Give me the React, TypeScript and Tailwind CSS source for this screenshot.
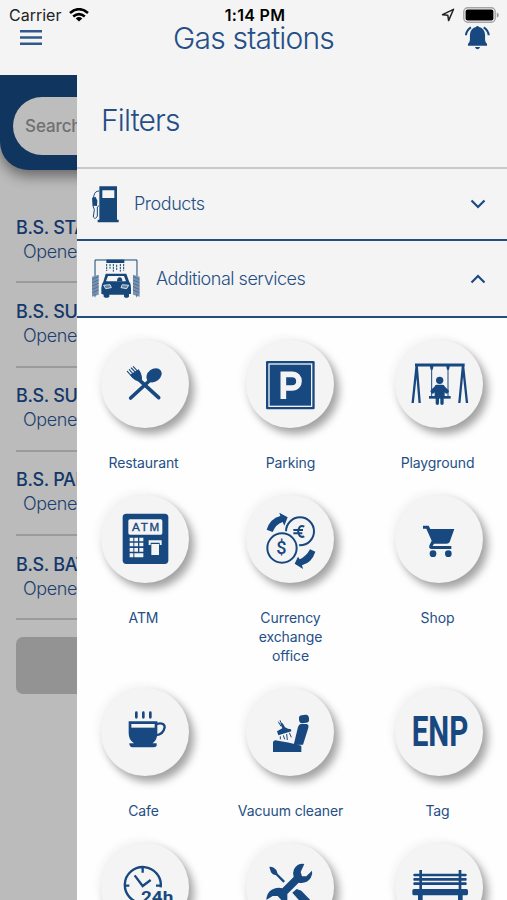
import type { ReactNode } from 'react';

const stations = ['B.S. STARA PAZOVA', 'B.S. SURČIN', 'B.S. SUBOTICA', 'B.S. PANČEVO', 'B.S. BATAJNICA'];

function IconCanvas({ viewBox, children }: { viewBox: string; children: ReactNode }) {
  return (
    <svg viewBox={viewBox} className="size-[88px]" fill="#184880" stroke="none">
      {children}
    </svg>
  );
}

function RestaurantIcon() {
  return (
    <IconCanvas viewBox="33 30 264 264">
      <g stroke="#184880" strokeLinecap="round">
        <path d="M146 148 206 203M184 147 122 204" strokeWidth="11" />
        <path d="M112 124l15 17M118 119l15 17M124 114l16 17M130 110l16 17" strokeWidth="3.4" />
      </g>
      <path d="M120 134 146 118Q157 133 156 149L150 155Q132 153 120 134Z" />
      <ellipse cx="192" cy="136" rx="25" ry="19" transform="rotate(-38 192 136)" />
    </IconCanvas>
  );
}

function ParkingIcon() {
  return (
    <IconCanvas viewBox="18 30 264 264">
      <rect x="78" y="93" width="146" height="145" rx="4" />
      <rect x="87" y="102" width="128" height="127" fill="none" stroke="#eef2f7" strokeWidth="4" />
      <path
        d="M130 207V133H156C184 133 184 174 156 174H130"
        fill="none"
        stroke="#f4f4f4"
        strokeWidth="17"
      />
    </IconCanvas>
  );
}

function PlaygroundIcon() {
  return (
    <IconCanvas viewBox="24 30 264 264">
      <g fill="none" stroke="#184880">
        <path d="M84 105H233" strokeWidth="9" />
        <path d="M89 106 77 219M89 106 98 219M228 106 217 219M228 106 240 219" strokeWidth="7" />
        <path d="M134 106V200M183 106V200" strokeWidth="3" />
        <path d="M126 202H191" strokeWidth="8" />
        <path d="M150 172 137 184M166 172 179 184" strokeWidth="13" strokeLinecap="round" />
        <path d="M151 198V220M165 198V220" strokeWidth="10" strokeLinecap="round" />
      </g>
      <path d="M128 106H140L137 119H131ZM177 106H189L186 119H180Z" />
      <circle cx="158" cy="151" r="11" />
      <rect x="143" y="164" width="30" height="40" rx="7" />
    </IconCanvas>
  );
}

function AtmIcon() {
  return (
    <IconCanvas viewBox="33 30 264 264">
      <rect x="98" y="86" width="137" height="151" rx="11" />
      <rect x="115" y="103" width="102" height="46" rx="5" fill="#f4f4f4" />
      <text
        x="126"
        y="138"
        textLength="82"
        lengthAdjust="spacing"
        className="font-['Liberation_Sans',sans-serif] text-[35px]"
        stroke="#184880"
        strokeWidth="1"
      >
        ATM
      </text>
      <g fill="#f4f4f4">
        <path d="M119 158h11v11h-11zM133 158h11v11h-11zM148 158h12v11h-12zM119 173h11v11h-11zM133 173h11v11h-11zM148 173h12v11h-12zM119 189h11v11h-11zM133 189h11v11h-11zM148 189h12v11h-12zM119 205h11v12h-11zM133 205h27v12h-27z" />
        <path d="M176 166h39v14h-6v-7h-27v7h-6z" />
        <path d="M184 177h23v33h-23z" />
      </g>
    </IconCanvas>
  );
}

function CurrencyIcon() {
  return (
    <IconCanvas viewBox="18 30 264 264">
      <circle cx="180" cy="139" r="42" fill="none" stroke="#184880" strokeWidth="6" />
      <circle cx="126" cy="189" r="52" fill="#f4f4f4" />
      <circle cx="126" cy="189" r="44" fill="none" stroke="#184880" strokeWidth="6" />
      <text x="109" y="207" className="font-[Roboto,sans-serif] text-[54px] font-medium">
        $
      </text>
      <path
        d="M193 125C169 113 168 165 193 154M160 135H189M160 145H187"
        fill="none"
        stroke="#184880"
        strokeWidth="6"
      />
      <path d="M80 134Q90 101 121 93L118 83 143 97 133 122 128 111Q107 118 98 141Z" />
      <path d="M226 200Q216 232 186 241L189 252 164 236 174 215 179 223Q199 214 210 193Z" />
    </IconCanvas>
  );
}

function ShopIcon() {
  return (
    <IconCanvas viewBox="465 30 264 264">
      <path d="M549 122H566L571 132H643L629 171Q626 176 620 176H582L578 183H634V192H574Q564 190 569 179L575 167 559 131H549Z" />
      <circle cx="579" cy="206" r="10" />
      <circle cx="625" cy="206" r="10" />
    </IconCanvas>
  );
}

function CafeIcon() {
  return (
    <IconCanvas viewBox="33 24 264 264">
      <path d="M116 124H202V159Q202 180 188 190H200V197Q197 202 190 202H127Q118 201 118 190H132Q116 180 116 159Z" />
      <rect x="124" y="132" width="70" height="11" fill="#f4f4f4" />
      <path
        d="M139 98V112M160 98V112M181 98V112"
        stroke="#184880"
        strokeWidth="8"
        strokeLinecap="round"
      />
      <path d="M199 132Q224 126 224 142Q220 164 197 166" fill="none" stroke="#184880" strokeWidth="7" />
    </IconCanvas>
  );
}

function VacuumIcon() {
  return (
    <IconCanvas viewBox="468 24 264 264">
      <rect x="627" y="105" width="30" height="24" rx="10" transform="rotate(-6 642 117)" />
      <path d="M632 132H650Q657 134 655 143L639 194 611 195 624 141Q626 134 632 132Z" />
      <path d="M556 181 598 188 634 197 634 216H549V187Q551 181 556 181Z" />
      <path d="M561 154 577 145 571 130H578L585 142Q594 148 603 148L604 154 565 166Z" />
      <path
        d="M570 121 578 139M565 125 573 139M571 169V178M580 166 584 178M590 162 592 180M598 158 604 172"
        fill="none"
        stroke="#184880"
        strokeWidth="3"
      />
    </IconCanvas>
  );
}

function TagIcon() {
  return (
    <IconCanvas viewBox="195 24 264 264">
      <text
        x="245"
        y="197"
        textLength="170"
        lengthAdjust="spacingAndGlyphs"
        className="font-[Roboto,sans-serif] text-[125px] font-bold"
      >
        ENP
      </text>
    </IconCanvas>
  );
}

function AllDayIcon() {
  return (
    <IconCanvas viewBox="33 489 264 264">
      <path
        d="M212 622A54 54 0 1 0 158 669M158 562V578M106 617H118M198 617H211M134 586 158 618 182 600"
        fill="none"
        stroke="#184880"
        strokeWidth="7"
      />
      <text
        x="153"
        y="668"
        textLength="97"
        lengthAdjust="spacingAndGlyphs"
        className="font-[Roboto,sans-serif] text-[52px] font-bold"
      >
        24h
      </text>
    </IconCanvas>
  );
}

function ServiceIcon() {
  return (
    <IconCanvas viewBox="468 489 264 264">
      <path d="M538 561Q548 558 559 570L563 581 585 603 580 608 558 586Q547 584 543 577Z" />
      <path d="M643 552Q623 549 612 568Q607 579 611 591L577 625Q562 620 545 629Q530 638 529 660L548 648H563L574 660H592L592 642 626 608Q650 612 662 594Q669 583 666 572L649 589H636L632 576Z" />
      <path d="M607 638 620 627 634 632 680 680H644Z" />
    </IconCanvas>
  );
}

function BenchIcon() {
  return (
    <IconCanvas viewBox="195 489 264 264">
      <path d="M268 570h8v104h-8zM386 570h8v104h-8z" />
      <rect x="250" y="581" width="160" height="8" rx="3" />
      <rect x="250" y="594" width="160" height="8" rx="3" />
      <rect x="250" y="607" width="160" height="8" rx="3" />
      <rect x="247" y="627" width="167" height="19" rx="5" />
      <path d="M264 644h14v40h-14zM384 644h14v40h-14z" />
    </IconCanvas>
  );
}

const services = [
  { label: 'Restaurant', icon: <RestaurantIcon /> },
  { label: 'Parking', icon: <ParkingIcon /> },
  { label: 'Playground', icon: <PlaygroundIcon /> },
  { label: 'ATM', icon: <AtmIcon /> },
  { label: 'Currency\nexchange\noffice', icon: <CurrencyIcon /> },
  { label: 'Shop', icon: <ShopIcon /> },
  { label: 'Cafe', icon: <CafeIcon /> },
  { label: 'Vacuum cleaner', icon: <VacuumIcon /> },
  { label: 'Tag', icon: <TagIcon /> },
  { label: '', icon: <AllDayIcon /> },
  { label: '', icon: <ServiceIcon /> },
  { label: '', icon: <BenchIcon /> },
];

// Circles sit slightly off the label axis in each column.
const columnPadding = ['pl-[2px]', 'pr-[2px]', 'pl-[2px]'];

function Header() {
  return (
    <header className="h-[75px] shrink-0 bg-[#f4f4f4]">
      <div className="grid h-[28px] grid-cols-3 items-center pt-[2px] pr-[8px] pl-[9px] text-black">
        <div className="flex items-center gap-[8px]">
          <span className="text-[16px] leading-[20px] text-[#222]">Carrier</span>
          <svg viewBox="0 0 20 14" className="h-[14px] w-[20px]" fill="none" stroke="#000" strokeWidth="2.6">
            <path d="M1 5Q10-2.6 19 5M4.2 8.6Q10 3.8 15.8 8.6" />
            <path d="M10 13.6 6.7 10.4Q10 7.6 13.3 10.4Z" fill="#000" stroke="none" />
          </svg>
        </div>
        <span className="pl-[2px] text-center text-[16px] leading-[20px] font-semibold tracking-[0.02em] whitespace-nowrap">
          1:14 PM
        </span>
        <div className="flex items-center justify-end gap-[8px]">
          <svg viewBox="0 0 14 14" className="size-[14px]" fill="none" stroke="#222" strokeWidth="1.5">
            <path d="M12.5 1.3 1.5 6.7 6.8 7.2 7.6 12.6Z" strokeLinejoin="round" />
          </svg>
          <svg viewBox="0 0 36 16" className="h-[16px] w-[36px]">
            <rect x="0.8" y="0.8" width="31.4" height="14.4" rx="4" fill="none" stroke="#a5a5a5" strokeWidth="1.4" />
            <rect x="2.6" y="2.6" width="27.8" height="10.8" rx="2" fill="#000" />
            <path d="M33.8 5.4Q35.8 6 35.8 8T33.8 10.6Z" fill="#999" />
          </svg>
        </div>
      </div>
      <div className="flex h-[19px] items-center justify-between pr-[17px] pl-[20px]">
        <svg viewBox="0 0 22 15" className="h-[15px] w-[22px]" fill="#30588c">
          <path d="M0 0h22v2.4H0zM0 6.3h22v2.4H0zM0 12.6h22V15H0z" />
        </svg>
        <h1 className="text-[30px] leading-[18px] font-light tracking-[-0.8px]">Gas stations</h1>
        <svg viewBox="632 75 76 76" className="size-[25px]" fill="#184880">
          <path d="M665 81Q670 75 675 81Q692 86 693 105V120Q693 127 699 133V138H641V133Q647 127 647 120V105Q648 86 665 81ZM662 142H678Q675 149 670 149T662 142Z" />
          <path d="M635 106Q636 91 650 82M704 106Q703 91 689 82" fill="none" stroke="#184880" strokeWidth="6" />
        </svg>
      </div>
    </header>
  );
}

function StationList() {
  return (
    <aside className="w-[77px] shrink-0 overflow-hidden bg-[#bbbbbb]">
      <div className="h-[95px] w-[500px] rounded-b-[28px] bg-[#10365f] pt-[22px] pl-[13px] shadow-[0_6px_14px_rgba(0,0,0,0.45)]">
        <div className="flex h-[58px] w-[474px] items-center rounded-full bg-[#bdbdbd] pt-[1px] pl-[12px] text-[17px] font-medium tracking-[-0.1px] text-[#707072]">
          Search
        </div>
      </div>
      <ul className="w-[476px] pt-[29px] pl-[16px]">
        {stations.map((name) => (
          <li key={name} className="h-[84.3px] border-b-2 border-[#9b9b9b] pt-[16.5px] whitespace-nowrap">
            <p className="text-[18px] leading-[24px] font-medium tracking-[-0.35px] text-[#12376a]">{name}</p>
            <p className="pl-[7px] text-[18px] leading-[24px] font-light tracking-[-0.4px] text-[#1c406f]">Opened</p>
          </li>
        ))}
      </ul>
      <div className="mt-[17px] ml-[16px] h-[57px] w-[476px] rounded-[7px] bg-[#939393]" />
    </aside>
  );
}

function Chevron({ up = false }: { up?: boolean }) {
  return (
    <svg viewBox="0 0 16 10" className="h-[10px] w-[16px]" fill="none" stroke="#1d4a80" strokeWidth="2.2">
      <path d={up ? 'M1.5 8.5 8 2 14.5 8.5' : 'M1.5 1.5 8 8 14.5 1.5'} />
    </svg>
  );
}

function PumpIcon() {
  return (
    <svg viewBox="42 75 84 114" className="h-[38px] w-[28px]" fill="#174679">
      <path fillRule="evenodd" d="M67 79H120V179H125V187H62V179H67ZM76 91V114H112V91Z" />
      <path
        d="M66 93Q54 93 51 106L48 120V138L52 149 49 171Q56 180 61 168V141L66 137"
        fill="none"
        stroke="#174679"
        strokeWidth="3"
      />
      <path d="M45 113 56 111 61 122 60 138 48 137Z" />
    </svg>
  );
}

function CarWashIcon() {
  return (
    <svg viewBox="44 292 150 124" className="h-[41.3px] w-[50px]" fill="#174679">
      <path d="M56 346V298H182V346" fill="none" stroke="#174679" strokeWidth="3" />
      <rect x="90" y="297" width="54" height="10" />
      <path
        d="M91 310V331M101 310V324M111 310V333M121 312V330M132 310V333M142 310V330"
        stroke="#174679"
        strokeWidth="3"
        strokeDasharray="7 2"
      />
      <path d="M47 348 67 342V402L47 408ZM170 342 190 348V408L170 402Z" fill="#7890ae" />
      <path
        d="M48 356 67 348M48 366 67 358M48 376 67 368M48 386 67 378M48 396 67 388M56 400V410M170 348 189 356M170 358 189 366M170 368 189 376M170 378 189 386M170 388 189 396M181 400V410"
        stroke="#456893"
        strokeWidth="2.4"
      />
      <path
        fillRule="evenodd"
        d="M88 339H150L158 362Q164 368 164 382V400H158V408Q151 415 143 408V402H99V408Q91 415 82 408V402L75 399V382Q75 369 81 363ZM95 346 89 362H149L143 346Z"
      />
      <path d="M122 362Q122 350 130 350T138 362Z" />
      <path d="M82 374 101 372 105 381 88 384ZM157 374 138 372 134 381 151 384Z" fill="#5f80a8" stroke="#f4f4f4" strokeWidth="2.5" />
    </svg>
  );
}

function FiltersPanel() {
  return (
    <main className="min-w-0 flex-1 bg-[#fefefe]">
      <div className="bg-[#f4f4f4]">
        <h2 className="flex h-[94px] items-center border-b-2 border-[#c9c9c9] pb-[1px] pl-[24px] text-[30px] font-light tracking-[-0.85px]">
          Filters
        </h2>
        <div className="flex h-[72px] items-center border-b-2 border-[#264c80] pr-[21px] pl-[14px]">
          <PumpIcon />
          <span className="flex-1 pb-[1px] pl-[15px] text-[18px] font-light tracking-[-0.45px]">Products</span>
          <Chevron />
        </div>
        <div className="flex h-[77px] items-center border-b-2 border-[#264c80] pr-[21px] pl-[14px]">
          <CarWashIcon />
          <span className="flex-1 pb-[1px] pl-[15px] text-[18px] font-light tracking-[-0.48px]">
            Additional services
          </span>
          <Chevron up />
        </div>
      </div>
      <div className="-ml-[7px] grid w-[441px] grid-cols-3 pt-[22px]">
        {services.map(({ label, icon }, index) => (
          <div key={index} className="flex flex-col items-center pb-[23px]">
            <div className={columnPadding[index % 3]}>
              <div className="size-[88px] rounded-full bg-[#f4f4f4] shadow-[5px_6px_9px_rgba(0,0,0,0.36),-3px_-3px_9px_#f3f3f3]">
                {icon}
              </div>
            </div>
            <p className="mt-[25px] min-h-[19px] text-center text-[14px] leading-[19px] tracking-[-0.1px] whitespace-pre">
              {label}
            </p>
          </div>
        ))}
      </div>
    </main>
  );
}

export default function App() {
  return (
    <div className="flex h-[900px] w-full flex-col overflow-hidden font-[Inter,sans-serif] text-[#254f86]">
      <Header />
      <div className="flex min-h-0 flex-1">
        <StationList />
        <FiltersPanel />
      </div>
    </div>
  );
}
